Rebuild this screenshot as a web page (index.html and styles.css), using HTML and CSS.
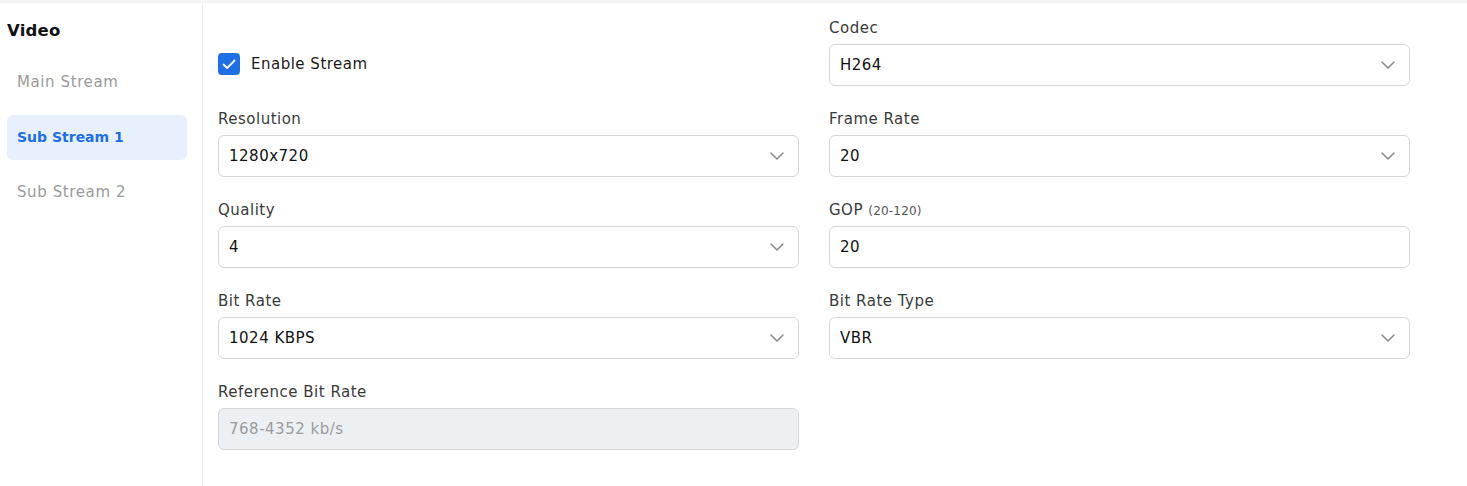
FILE: index.html
```html
<!DOCTYPE html>
<html lang="en">
<head>
<meta charset="utf-8">
<title>Video</title>
<link rel="stylesheet" href="styles.css">
</head>
<body>
<div class="page">
  <aside class="sidebar">
    <h2 class="side-title">Video</h2>
    <nav class="nav">
      <div class="nav-item">Main Stream</div>
      <div class="nav-item active">Sub Stream 1</div>
      <div class="nav-item">Sub Stream 2</div>
    </nav>
  </aside>
  <main class="content">
    <div class="grid">
      <div class="field check-field">
        <label class="check">
          <span class="box"><svg width="14" height="11" viewBox="0 0 14 11"><path d="M1.5 5.5 L5.2 9 L12.5 1.5" fill="none" stroke="#fff" stroke-width="1.8" stroke-linecap="round" stroke-linejoin="round"/></svg></span>
          <span>Enable Stream</span>
        </label>
      </div>
      <div class="field">
        <div class="label">Codec</div>
        <div class="select"><span>H264</span><svg class="chev" width="14" height="8" viewBox="0 0 14 8"><path d="M1 1 L7 7 L13 1" fill="none" stroke="#8a8a8a" stroke-width="1.5" stroke-linecap="round" stroke-linejoin="round"/></svg></div>
      </div>

      <div class="field">
        <div class="label">Resolution</div>
        <div class="select"><span>1280x720</span><svg class="chev" width="14" height="8" viewBox="0 0 14 8"><path d="M1 1 L7 7 L13 1" fill="none" stroke="#8a8a8a" stroke-width="1.5" stroke-linecap="round" stroke-linejoin="round"/></svg></div>
      </div>
      <div class="field">
        <div class="label">Frame Rate</div>
        <div class="select"><span>20</span><svg class="chev" width="14" height="8" viewBox="0 0 14 8"><path d="M1 1 L7 7 L13 1" fill="none" stroke="#8a8a8a" stroke-width="1.5" stroke-linecap="round" stroke-linejoin="round"/></svg></div>
      </div>

      <div class="field">
        <div class="label">Quality</div>
        <div class="select"><span>4</span><svg class="chev" width="14" height="8" viewBox="0 0 14 8"><path d="M1 1 L7 7 L13 1" fill="none" stroke="#8a8a8a" stroke-width="1.5" stroke-linecap="round" stroke-linejoin="round"/></svg></div>
      </div>
      <div class="field">
        <div class="label">GOP <small class="hint">(20-120)</small></div>
        <div class="input"><span>20</span></div>
      </div>

      <div class="field">
        <div class="label">Bit Rate</div>
        <div class="select"><span>1024 KBPS</span><svg class="chev" width="14" height="8" viewBox="0 0 14 8"><path d="M1 1 L7 7 L13 1" fill="none" stroke="#8a8a8a" stroke-width="1.5" stroke-linecap="round" stroke-linejoin="round"/></svg></div>
      </div>
      <div class="field">
        <div class="label">Bit Rate Type</div>
        <div class="select"><span>VBR</span><svg class="chev" width="14" height="8" viewBox="0 0 14 8"><path d="M1 1 L7 7 L13 1" fill="none" stroke="#8a8a8a" stroke-width="1.5" stroke-linecap="round" stroke-linejoin="round"/></svg></div>
      </div>

      <div class="field">
        <div class="label">Reference Bit Rate</div>
        <div class="input disabled"><span>768-4352 kb/s</span></div>
      </div>
    </div>
  </main>
</div>
</body>
</html>
```
FILE: styles.css
```css
* { box-sizing: border-box; }
html, body { margin: 0; padding: 0; background: #fff; }
body {
  font-family: "DejaVu Sans", "Open Sans", sans-serif;
  font-size: 15px;
  letter-spacing: 0.5px;
  color: #1a1a1a;
}
.page {
  display: flex;
  border-top: 3px solid #f3f3f5;
  min-height: 486px;
}
.sidebar {
  width: 203px;
  flex: none;
  border-right: 1px solid #ececec;
  padding: 17px 15px 0 7px;
}
.side-title {
  margin: 0 0 18px 0;
  font-size: 16.5px;
  font-weight: bold;
  letter-spacing: 0.2px;
  color: #111;
  line-height: 22px;
}
.nav { display: flex; flex-direction: column; gap: 10px; }
.nav-item {
  height: 45px;
  line-height: 45px;
  padding-left: 10px;
  color: #9a9a9a;
  font-size: 15px;
  letter-spacing: 0.6px;
  border-radius: 6px;
}
.nav-item.active {
  background: #e9f0fd;
  color: #1f6fe5;
  font-weight: bold;
  font-size: 14px;
  letter-spacing: 0;
}
.content {
  flex: 1;
  padding: 15px 0 0 15px;
}
.grid {
  display: grid;
  grid-template-columns: 581px 581px;
  column-gap: 30px;
  row-gap: 23px;
}
.field { display: flex; flex-direction: column; }
.check-field { justify-content: flex-start; padding-top: 35px; }
.check {
  display: flex;
  align-items: center;
  gap: 11px;
  color: #1a1a1a;
}
.box {
  width: 22px;
  height: 22px;
  border-radius: 4px;
  background: #1f6fe5;
  display: flex;
  align-items: center;
  justify-content: center;
}
.label {
  color: #3a3a3a;
  height: 20px;
  line-height: 20px;
  margin-bottom: 6px;
}
.hint { font-size: 12px; line-height: 1; color: #555; letter-spacing: 0.2px; }
.select, .input {
  height: 42px;
  border: 1px solid #d6d6d6;
  border-radius: 6px;
  padding: 0 14px 0 10px;
  display: flex;
  align-items: center;
  justify-content: space-between;
  color: #111;
}
.input.disabled {
  background: #edf0f3;
  color: #9b9b9b;
}
.chev { flex: none; }
```
